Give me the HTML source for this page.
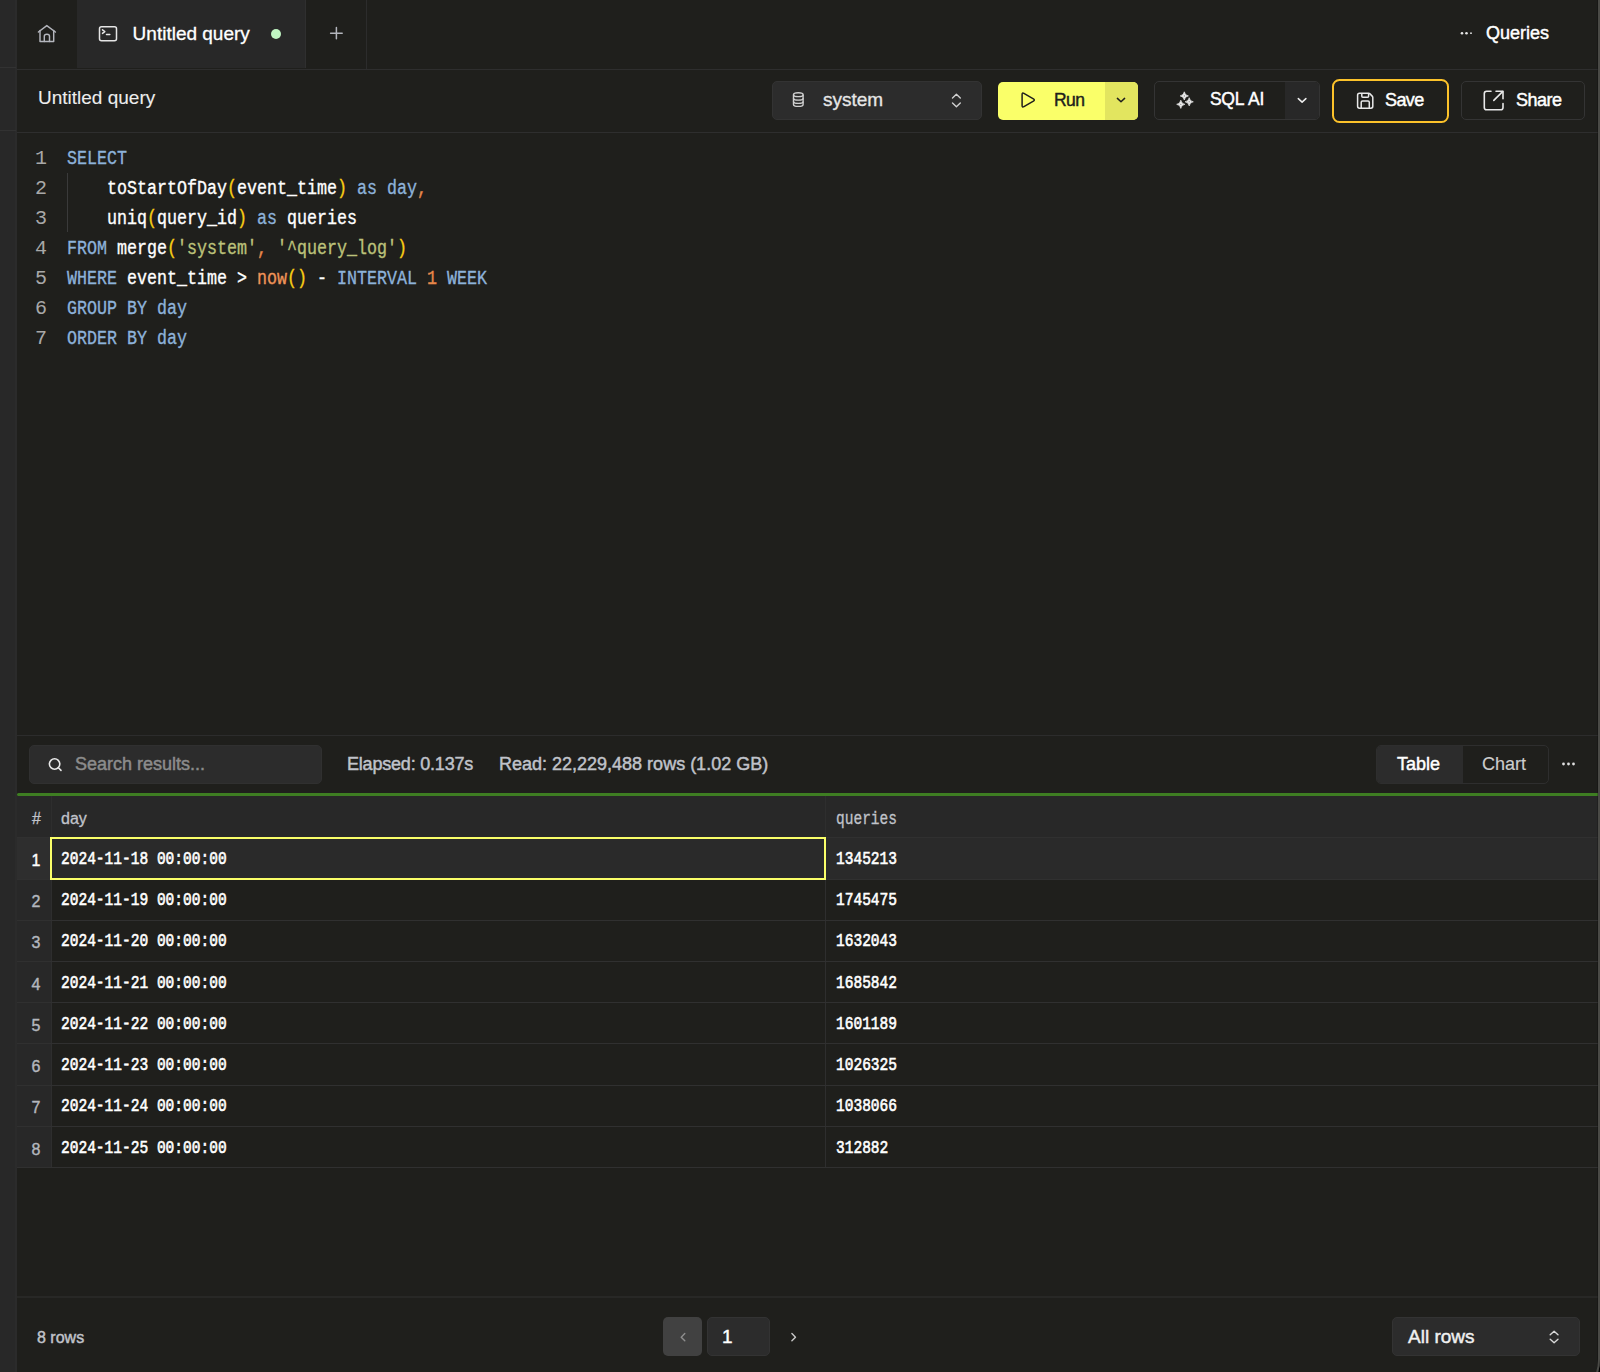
<!DOCTYPE html>
<html><head><meta charset="utf-8">
<style>
*{box-sizing:border-box;margin:0;padding:0}
html,body{width:1600px;height:1372px;overflow:hidden;background:#1f1f1c;font-family:"Liberation Sans",sans-serif;color:#fff}
.a{position:absolute}
.t{position:absolute;white-space:pre;line-height:1;-webkit-text-stroke:0.45px currentColor}
.mono{font-family:"Liberation Mono",monospace}
svg{position:absolute;overflow:visible}
</style></head><body>
<!-- left strip -->
<div class="a" style="left:0;top:0;width:15px;height:1372px;background:#282828"></div>
<div class="a" style="left:15px;top:0;width:2px;height:1372px;background:#2b2b2b"></div>
<div class="a" style="left:0;top:67px;width:16px;height:1px;background:#323232"></div>
<div class="a" style="left:0;top:130px;width:16px;height:1px;background:#323232"></div>

<!-- TAB BAR -->
<div class="a" style="left:77px;top:0;width:228px;height:68px;background:#282828"></div>
<div class="a" style="left:305px;top:0;width:1px;height:68px;background:#2f2f2f"></div>
<div class="a" style="left:366px;top:0;width:1px;height:69px;background:#2c2c2c"></div>
<div class="a" style="left:17px;top:69px;width:1583px;height:1px;background:#2e2e2e"></div>

<!-- home icon -->
<svg style="left:0;top:0" width="100" height="70"><g fill="none" stroke="#b4b6bd" stroke-width="1.45" stroke-linejoin="round" stroke-linecap="round">
<path d="M38.4 32 L46.8 25.6 L55.4 32"/><path d="M40 30.5 V41.4 H53.7 V30.5"/><path d="M44.3 41.4 V36.2 Q44.3 34.2 46.9 34.2 Q49.5 34.2 49.5 36.2 V41.4"/></g></svg>

<!-- terminal icon -->
<svg style="left:0;top:0" width="130" height="70"><g fill="none" stroke="#e6e6e6" stroke-width="1.5" stroke-linecap="round" stroke-linejoin="round">
<rect x="99.5" y="26.8" width="17" height="14" rx="2"/><path d="M102.5 29.8 L104.8 31.6 L102.5 33.4"/><path d="M106.5 34.6 H109.8"/></g></svg>
<div class="t" style="left:132.6px;top:23.5px;font-size:19px;-webkit-text-stroke:0.3px #fff">Untitled query</div>
<div class="a" style="left:271px;top:29px;width:10px;height:10px;border-radius:50%;background:#c0f5c2"></div>
<!-- plus -->
<svg style="left:0;top:0" width="400" height="70"><g stroke="#b4b6bd" stroke-width="1.5" stroke-linecap="round"><path d="M336.4 27.4 V38.8 M330.6 33.3 H342.2"/></g></svg>

<!-- Queries -->
<svg style="left:0;top:0" width="1600" height="70"><g fill="#e6e6e6"><circle cx="1462" cy="33.2" r="1.3"/><circle cx="1466.5" cy="33.2" r="1.3"/><circle cx="1471" cy="33.2" r="0.9"/></g></svg>
<div class="t" style="left:1486px;top:24px;font-size:18px">Queries</div>

<!-- TOOLBAR -->
<div class="a" style="left:17px;top:132px;width:1583px;height:1px;background:#2e2e2e"></div>
<div class="t" style="left:38px;top:88px;font-size:19px;color:#ededed;-webkit-text-stroke:0.1px #ededed">Untitled query</div>

<!-- system select -->
<div class="a" style="left:772px;top:81px;width:210px;height:39px;background:#2c2c2c;border:1px solid #333;border-radius:5px"></div>
<svg style="left:0;top:0" width="1000" height="140"><g fill="none" stroke="#d0d0d0" stroke-width="1.4">
<ellipse cx="798.3" cy="94.7" rx="4.8" ry="1.9"/><path d="M793.5 94.7 V104.4 Q793.5 106.4 798.3 106.4 Q803.1 106.4 803.1 104.4 V94.7"/><path d="M793.5 98.2 Q793.5 100.1 798.3 100.1 Q803.1 100.1 803.1 98.2"/><path d="M793.5 101.5 Q793.5 103.4 798.3 103.4 Q803.1 103.4 803.1 101.5"/></g>
<g fill="none" stroke="#d0d0d0" stroke-width="1.4" stroke-linecap="round" stroke-linejoin="round"><path d="M952.5 98 L956.4 94.3 L960.3 98"/><path d="M952.5 103 L956.4 106.7 L960.3 103"/></g></svg>
<div class="t" style="left:823px;top:90px;font-size:19px;color:#e6e6e6;-webkit-text-stroke:0.3px #e6e6e6">system</div>

<!-- Run -->
<div class="a" style="left:997.5px;top:82px;width:140.5px;height:38px;background:#faff69;border-radius:5px;overflow:hidden"><div class="a" style="left:107.5px;top:0;width:34px;height:38px;background:#e2e55f"></div></div>
<svg style="left:0;top:0" width="1200" height="140"><g fill="none" stroke="#1f1f1c" stroke-width="1.5" stroke-linejoin="round" stroke-linecap="round"><path d="M1022.1 94.4 Q1022.1 92.3 1023.9 93.3 L1033.4 98.8 Q1035.2 100 1033.4 101.2 L1023.9 106.7 Q1022.1 107.7 1022.1 105.6 Z"/><path d="M1117.4 98.4 L1121 101.7 L1124.6 98.4"/></g></svg>
<div class="t" style="left:1054px;top:92px;font-size:17.5px;letter-spacing:-0.6px;color:#1f1f1c">Run</div>

<!-- SQL AI -->
<div class="a" style="left:1154px;top:81px;width:166px;height:39px;border:1px solid #343434;border-radius:5px;overflow:hidden"><div class="a" style="left:130px;top:0;width:36px;height:39px;background:#282828"></div></div>
<svg style="left:0;top:0" width="1400" height="140"><g fill="#eeeeee" stroke="#eeeeee" stroke-width="0.7" stroke-linejoin="round"><path d="M1184.3 91.80000000000001 Q1184.85 95.35000000000001 1188.3999999999999 95.9 Q1184.85 96.45 1184.3 100.0 Q1183.75 96.45 1180.2 95.9 Q1183.75 95.35000000000001 1184.3 91.80000000000001Z"/><path d="M1189.2 97.7 Q1189.75 101.25 1193.3 101.8 Q1189.75 102.35 1189.2 105.89999999999999 Q1188.65 102.35 1185.1000000000001 101.8 Q1188.65 101.25 1189.2 97.7Z"/><path d="M1180.8 100.2 Q1181.35 103.75 1184.8999999999999 104.3 Q1181.35 104.85 1180.8 108.39999999999999 Q1180.25 104.85 1176.7 104.3 Q1180.25 103.75 1180.8 100.2Z"/></g><g fill="#666"><circle cx="1184.3" cy="95.9" r="0.55"/><circle cx="1189.2" cy="101.8" r="0.55"/><circle cx="1180.8" cy="104.3" r="0.55"/></g>
<g fill="none" stroke="#eeeeee" stroke-width="1.5" stroke-linecap="round" stroke-linejoin="round"><path d="M1298.3 98.6 L1302.1 102.1 L1305.9 98.6"/></g></svg>
<div class="t" style="left:1210px;top:91px;font-size:17.5px;letter-spacing:-0.3px;word-spacing:1px">SQL AI</div>

<!-- Save -->
<div class="a" style="left:1332px;top:78.8px;width:116.5px;height:44px;border:2.8px solid #fcc22a;border-radius:7.5px"></div>
<svg style="left:0;top:0" width="1400" height="140"><g fill="none" stroke="#e8e8e8" stroke-width="1.5" stroke-linejoin="round">
<path d="M1359.5 93.3 H1368.6 Q1369.4 93.3 1370 93.9 L1372.2 96.1 Q1372.8 96.7 1372.8 97.5 V106.3 Q1372.8 108.2 1370.9 108.2 H1359.5 Q1357.6 108.2 1357.6 106.3 V95.2 Q1357.6 93.3 1359.5 93.3Z"/><path d="M1361.8 93.5 V96.3 Q1361.8 97.3 1362.8 97.3 H1367.6 Q1368.6 97.3 1368.6 96.3 V93.5"/><path d="M1361.2 108 V102.2 Q1361.2 100.9 1362.5 100.9 H1368 Q1369.3 100.9 1369.3 102.2 V108"/></g></svg>
<div class="t" style="left:1385px;top:91px;font-size:18px;letter-spacing:-0.6px">Save</div>

<!-- Share -->
<div class="a" style="left:1461px;top:81px;width:124px;height:39px;border:1px solid #343434;border-radius:5px"></div>
<svg style="left:0;top:0" width="1600" height="140"><g fill="none" stroke="#e8e8e8" stroke-width="1.6" stroke-linecap="round" stroke-linejoin="round">
<path d="M1491 91.2 H1486.6 Q1484.3 91.2 1484.3 93.5 V107.5 Q1484.3 109.8 1486.6 109.8 H1500.7 Q1503 109.8 1503 107.5 V103.6"/><path d="M1496 91.2 H1503 V98.8"/><path d="M1502.6 91.6 L1493.8 100.4"/></g></svg>
<div class="t" style="left:1516px;top:91px;font-size:18px;letter-spacing:-0.5px">Share</div>

<!-- EDITOR -->
<style>
.ln{position:absolute;left:0;width:47px;text-align:right;font-family:"Liberation Mono",monospace;font-size:20px;line-height:30px;color:#a8a8a8;white-space:pre}
.cl{position:absolute;left:67px;font-family:"Liberation Mono",monospace;font-size:20px;line-height:30px;color:#fff;white-space:pre;transform:scaleX(0.8333);transform-origin:0 0;-webkit-text-stroke:0.35px currentColor}
.k{color:#8db2da}.p{color:#f8cd14}.s{color:#bcc27a}.o{color:#e8884a}.f{color:#f09458}
</style>
<div id="code" class="a" style="left:0;top:143.5px;width:800px;height:220px">
<div class="ln" style="top:0">1</div><div class="cl" style="top:0"><span class="k">SELECT</span></div>
<div class="ln" style="top:30px">2</div><div class="cl" style="top:30px">    toStartOfDay<span class="p">(</span>event_time<span class="p">)</span> <span class="k">as day</span><span class="o">,</span></div>
<div class="ln" style="top:60px">3</div><div class="cl" style="top:60px">    uniq<span class="p">(</span>query_id<span class="p">)</span> <span class="k">as</span> queries</div>
<div class="ln" style="top:90px">4</div><div class="cl" style="top:90px"><span class="k">FROM</span> merge<span class="p">(</span><span class="s">'system'</span><span class="o">,</span> <span class="s">'^query_log'</span><span class="p">)</span></div>
<div class="ln" style="top:120px">5</div><div class="cl" style="top:120px"><span class="k">WHERE</span> event_time &gt; <span class="f">now</span><span class="p">()</span> - <span class="k">INTERVAL</span> <span class="o">1</span> <span class="k">WEEK</span></div>
<div class="ln" style="top:150px">6</div><div class="cl" style="top:150px"><span class="k">GROUP BY day</span></div>
<div class="ln" style="top:180px">7</div><div class="cl" style="top:180px"><span class="k">ORDER BY day</span></div>
</div>
<div class="a" style="left:67px;top:173px;width:1px;height:59px;background:#3a3a3a"></div>

<!-- RESULTS TOOLBAR -->
<div class="a" style="left:17px;top:735px;width:1583px;height:1px;background:#2c2c2c"></div>
<div class="a" style="left:29px;top:745px;width:293px;height:39px;background:#2c2c2c;border:1px solid #303030;border-radius:5px"></div>
<svg style="left:0;top:0" width="400" height="800"><g fill="none" stroke="#e8e8e8" stroke-width="1.6" stroke-linecap="round"><circle cx="54.6" cy="764" r="5.2"/><path d="M58.4 767.8 L61 770.4"/></g></svg>
<div class="t" style="left:75px;top:755px;font-size:18px;color:#8c8c8c">Search results...</div>
<div class="t" style="left:347px;top:755px;font-size:18px;letter-spacing:-0.2px;color:#c0c3ca">Elapsed: 0.137s</div>
<div class="t" style="left:499px;top:755px;font-size:18px;color:#c0c3ca">Read: 22,229,488 rows (1.02 GB)</div>

<div class="a" style="left:1376px;top:745px;width:173px;height:39px;border:1px solid #2e2e2e;border-radius:5px;overflow:hidden"><div class="a" style="left:0;top:0;width:86px;height:39px;background:#2c2c2c"></div></div>
<div class="t" style="left:1397px;top:755px;font-size:18px">Table</div>
<div class="t" style="left:1482px;top:755px;font-size:18px;color:#cdcdcd;-webkit-text-stroke:0.15px #cdcdcd">Chart</div>
<svg style="left:0;top:0" width="1600" height="800"><g fill="#e0e0e0"><circle cx="1563.5" cy="764" r="1.4"/><circle cx="1568.5" cy="764" r="1.4"/><circle cx="1573.5" cy="764" r="1.4"/></g></svg>

<div class="a" style="left:17px;top:793px;width:1583px;height:3px;background:#3e7e22;border-radius:2px 0 0 2px"></div>

<!-- TABLE -->
<style>
.hd{position:absolute;font-size:16px;line-height:1;color:#c0c3ca;white-space:pre;-webkit-text-stroke:0.3px currentColor}
.rn{position:absolute;left:19px;width:34px;text-align:center;font-size:16px;line-height:1;color:#b4b7be;white-space:pre;-webkit-text-stroke:0.4px currentColor}
.cv{position:absolute;font-family:"Liberation Mono",monospace;font-weight:normal;-webkit-text-stroke:0.6px #fff;font-size:17.5px;line-height:1;color:#fff;white-space:pre;transform:scaleX(0.83);transform-origin:0 0}
.rowline{position:absolute;left:17px;width:1583px;height:1px;background:#303030}
</style>
<div class="a" style="left:17px;top:796px;width:1583px;height:41px;background:#282828"></div>
<div class="a" style="left:17px;top:837px;width:1583px;height:42px;background:#2a2a2a"></div>
<div class="a" style="left:17px;top:837px;width:34px;height:330px;background:#282828"></div>
<div class="a" style="left:17px;top:837px;width:34px;height:42px;background:#2e2e2e"></div>
<div class="a" style="left:51px;top:796px;width:1px;height:371px;background:#2e2e2e"></div>
<div class="a" style="left:825px;top:796px;width:1px;height:371px;background:#2e2e2e"></div>
<div class="rowline" style="top:837px"></div>
<div class="rowline" style="top:879px"></div>
<div class="rowline" style="top:920px"></div>
<div class="rowline" style="top:961px"></div>
<div class="rowline" style="top:1002px"></div>
<div class="rowline" style="top:1043px"></div>
<div class="rowline" style="top:1085px"></div>
<div class="rowline" style="top:1126px"></div>
<div class="rowline" style="top:1167px"></div>
<div class="a" style="left:50px;top:836.5px;width:776px;height:43px;border:2.5px solid #faff69"></div>

<div class="hd" style="left:32px;top:810.5px">#</div>
<div class="hd" style="left:61px;top:810.5px">day</div>
<div class="hd mono" style="left:836px;top:810.5px;font-size:17.5px;transform:scaleX(0.83);transform-origin:0 0">queries</div>

<div id="rows">
<div class="rn" style="top:852.5px;color:#fff">1</div><div class="cv" style="left:61px;top:851px">2024-11-18 00:00:00</div><div class="cv" style="left:836px;top:851px">1345213</div>
<div class="rn" style="top:893.5px">2</div><div class="cv" style="left:61px;top:892px">2024-11-19 00:00:00</div><div class="cv" style="left:836px;top:892px">1745475</div>
<div class="rn" style="top:934.5px">3</div><div class="cv" style="left:61px;top:933px">2024-11-20 00:00:00</div><div class="cv" style="left:836px;top:933px">1632043</div>
<div class="rn" style="top:976.5px">4</div><div class="cv" style="left:61px;top:975px">2024-11-21 00:00:00</div><div class="cv" style="left:836px;top:975px">1685842</div>
<div class="rn" style="top:1017.5px">5</div><div class="cv" style="left:61px;top:1016px">2024-11-22 00:00:00</div><div class="cv" style="left:836px;top:1016px">1601189</div>
<div class="rn" style="top:1058.5px">6</div><div class="cv" style="left:61px;top:1057px">2024-11-23 00:00:00</div><div class="cv" style="left:836px;top:1057px">1026325</div>
<div class="rn" style="top:1099.5px">7</div><div class="cv" style="left:61px;top:1098px">2024-11-24 00:00:00</div><div class="cv" style="left:836px;top:1098px">1038066</div>
<div class="rn" style="top:1141.5px">8</div><div class="cv" style="left:61px;top:1140px">2024-11-25 00:00:00</div><div class="cv" style="left:836px;top:1140px">312882</div>
</div>

<!-- FOOTER -->
<div class="a" style="left:17px;top:1296px;width:1583px;height:2px;background:#282826"></div>
<div class="t" style="left:37px;top:1330px;font-size:16px;color:#c0c3ca">8 rows</div>
<div class="a" style="left:663px;top:1317px;width:39px;height:39px;background:#414141;border-radius:5px"></div>
<svg style="left:0;top:0" width="1600" height="1372"><g fill="none" stroke="#8e8e8e" stroke-width="1.4" stroke-linecap="round" stroke-linejoin="round"><path d="M684.8 1333.6 L681.2 1337.2 L684.8 1340.8"/></g>
<g fill="none" stroke="#c8c8c8" stroke-width="1.4" stroke-linecap="round" stroke-linejoin="round"><path d="M791.9 1333.6 L795.5 1337.2 L791.9 1340.8"/></g></svg>
<div class="a" style="left:707px;top:1317px;width:63px;height:39px;background:#2c2c2c;border:1px solid #333;border-radius:5px"></div>
<div class="t" style="left:722px;top:1327px;font-size:19px">1</div>
<div class="a" style="left:1392px;top:1317px;width:188px;height:39px;background:#2c2c2c;border:1px solid #333;border-radius:5px"></div>
<div class="t" style="left:1408px;top:1327px;font-size:19px;color:#f0f0f0">All rows</div>

<svg style="left:0;top:0" width="1600" height="1372"><g fill="none" stroke="#d8d8d8" stroke-width="1.4" stroke-linecap="round" stroke-linejoin="round"><path d="M1550.2 1334.8 L1554.1 1331.2 L1558 1334.8"/><path d="M1550.2 1339.2 L1554.1 1342.8 L1558 1339.2"/></g></svg>
<!-- right window edge -->
<div class="a" style="left:1597px;top:0;width:1px;height:1372px;background:rgba(0,0,0,0.2)"></div>
<div class="a" style="left:1598px;top:0;width:2px;height:1300px;background:#4a4a46"></div>
<div class="a" style="left:1540px;top:1300px;width:60px;height:72px;overflow:hidden"><div class="a" style="left:-50px;top:-100px;width:110px;height:209px;border-right:2px solid #4a4a46;border-bottom:2px solid #4a4a46;border-bottom-right-radius:50px;box-shadow:0 0 0 100px #000"></div></div>

</body></html>
